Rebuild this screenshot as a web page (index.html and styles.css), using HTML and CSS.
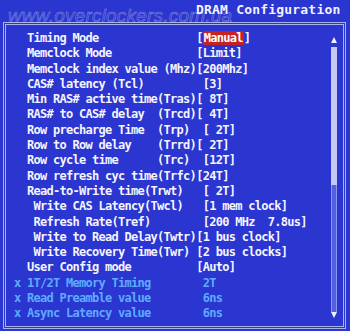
FILE: index.html
```html
<!DOCTYPE html>
<html lang="en">
<head>
    <meta charset="UTF-8">
    <meta name="viewport" content="width=device-width, initial-scale=1.0">
    <title>DRAM Configuration</title>
    <link rel="stylesheet" href="styles.css">
</head>
<body>
    <div class="screen">
        <div class="header">
            <span class="watermark">www.overclockers.com.ua</span>
            <h1 class="title">DRAM Configuration</h1>
        </div>

        <div class="panel">
            <div class="list">
                <div class="row">  Timing Mode               [<span class="sel">Manual</span>]</div>
                <div class="row">  Memclock Mode             [Limit]</div>
                <div class="row">  Memclock index value (Mhz)[200Mhz]</div>
                <div class="row">  CAS# latency (Tcl)         [3]</div>
                <div class="row">  Min RAS# active time(Tras)[ 8T]</div>
                <div class="row">  RAS# to CAS# delay  (Trcd)[ 4T]</div>
                <div class="row">  Row precharge Time  (Trp)  [ 2T]</div>
                <div class="row">  Row to Row delay    (Trrd)[ 2T]</div>
                <div class="row">  Row cycle time      (Trc)  [12T]</div>
                <div class="row">  Row refresh cyc time(Trfc)[24T]</div>
                <div class="row">  Read-to-Write time(Trwt)   [ 2T]</div>
                <div class="row">   Write CAS Latency(Twcl)   [1 mem clock]</div>
                <div class="row">   Refresh Rate(Tref)        [200 MHz  7.8us]</div>
                <div class="row">   Write to Read Delay(Twtr)[1 bus clock]</div>
                <div class="row">   Write Recovery Time(Twr) [2 bus clocks]</div>
                <div class="row">  User Config mode          [Auto]</div>
                <div class="row off">x 1T/2T Memory Timing        2T</div>
                <div class="row off">x Read Preamble value        6ns</div>
                <div class="row off">x Async Latency value        6ns</div>
            </div>
            <div class="scroll">
                <div class="arrow-up"></div>
                <div class="thumb"></div>
                <div class="track"></div>
                <div class="arrow-down"></div>
            </div>
        </div>
    </div>
</body>
</html>
```

FILE: styles.css
```css
body {
    margin: 0;
    background-color: #2b35cf;
    font-family: "DejaVu Sans Mono", "Liberation Mono", monospace;
}
.screen {
    position: relative;
    width: 350px;
    height: 331px;
    overflow: hidden;
    background-color: #2b35cf;
}
.header {
    position: relative;
    height: 22px;
    padding-left: 196px;
    box-sizing: border-box;
}
.watermark {
    position: absolute;
    left: 8px;
    top: 5px;
    font-family: "Liberation Sans", Arial, sans-serif;
    font-style: italic;
    font-size: 19px;
    letter-spacing: 0.2px;
    color: rgba(255, 255, 255, 0.05);
    -webkit-text-stroke: 0.5px rgba(190, 196, 236, 0.6);
}
.title {
    position: relative;
    margin: 0;
    padding-top: 2px;
    font-size: 13px;
    line-height: 16px;
    font-weight: bold;
    color: #f2f2ff;
    letter-spacing: 0.2px;
}
.panel {
    display: flex;
    height: 307px;
    margin: 0 4px 0 3px;
    box-sizing: border-box;
    border: 3px double #aab4ec;
}
.list {
    flex: 1;
    padding: 6px 0 0 8px;
}
.row {
    height: 15.3px;
    line-height: 15.3px;
    white-space: pre;
    font-size: 12px;
    font-weight: bold;
    letter-spacing: -0.72px;
    color: #f4f4ff;
}
.row.off {
    color: #5eaaff;
}
.sel {
    background-color: #c8221e;
    color: #ffffff;
    padding: 0 1px;
}
.scroll {
    display: flex;
    flex-direction: column;
    align-items: center;
    width: 8px;
    margin-right: 5px;
    padding: 12px 0 8px;
}
.arrow-up {
    width: 0;
    height: 0;
    border-left: 3px solid transparent;
    border-right: 3px solid transparent;
    border-bottom: 6px solid #f0f0ff;
    margin-bottom: 4px;
}
.thumb {
    width: 6px;
    height: 138px;
    background-color: #c3c9f2;
}
.track {
    flex: 1;
    width: 4px;
    background-color: #5560e0;
    border-left: 1px solid #8c96ee;
    border-right: 1px solid #8c96ee;
}
.arrow-down {
    width: 0;
    height: 0;
    border-left: 3px solid transparent;
    border-right: 3px solid transparent;
    border-top: 6px solid #f0f0ff;
}
```
